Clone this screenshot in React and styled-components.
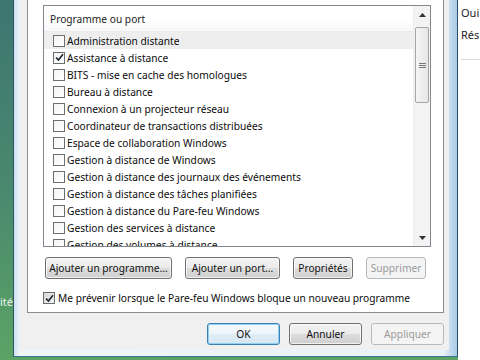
import React from 'react';
import styled, { createGlobalStyle, css } from 'styled-components';

const Global = createGlobalStyle`
  html, body { margin: 0; padding: 0; }
  body {
    width: 480px; height: 360px; overflow: hidden;
    font-family: "Noto Sans", "Open Sans", sans-serif;
    font-size: 10.2px; color: #0c0c0c;
  }
`;

const Screen = styled.div`
  width: 480px; height: 360px; display: flex; overflow: hidden;
  background: linear-gradient(180deg, #3d7571 0%, #4a8a6e 55%, #5ba365 100%);
`;

const DesktopEdge = styled.div`
  width: 13px; flex: none; overflow: hidden; box-sizing: border-box;
  padding-top: 294px; display: flex; justify-content: flex-end;
  color: #eaf5ec; font-size: 11px; white-space: nowrap;
`;

const Window = styled.div`
  width: 445px; height: 357px; flex: none; box-sizing: border-box;
  border-left: 1px solid #2c5563; border-right: 1px solid #2b4e6a;
  border-bottom: 1px solid #3d7390;
  background: linear-gradient(90deg, #cde0f1 0%, #eef5fb 1.4%, #eaf3fa 97%, #c8def0 98.3%, #a9cbe7 100%);
  padding: 0 8px 6px 6px;
  display: flex; flex-direction: column;
`;

const Dialog = styled.div`
  flex: 1; background: #f0f0f0; display: flex; flex-direction: column;
  padding: 0 5px 0 7px; min-height: 0;
`;

const TabPage = styled.div`
  height: 313px; flex: none; box-sizing: border-box; background: #fff;
  border: 1px solid #898c95; border-top: none;
  padding: 5px 0 0 15px; display: flex; flex-direction: column;
`;

const ListBox = styled.div`
  width: 388px; height: 242px; box-sizing: border-box; flex: none;
  border: 1px solid #828790; display: flex; overflow: hidden; background: #fff;
`;

const ListContent = styled.div`
  flex: 1; display: flex; flex-direction: column; overflow: hidden;
`;

const Header = styled.div`
  height: 26px; flex: none; display: flex; align-items: center;
  padding-left: 6px; box-sizing: border-box;
  background: linear-gradient(180deg, #ffffff 0%, #ffffff 55%, #f7f8f9 100%);
  border-bottom: 1px solid #eaecee; color: #222;
`;

const Row = styled.div`
  height: 17px; flex: none; display: flex; align-items: center;
  padding-left: 9px; gap: 2px; white-space: nowrap;
  background: ${p => (p.$hot ? '#eeeeee' : 'transparent')};
`;

const Box = styled.span`
  width: ${p => p.$size}px; height: ${p => p.$size}px; box-sizing: border-box; flex: none;
  border: 1px solid #6e6e6e; display: inline-flex; align-items: center; justify-content: center;
  background: ${p => (p.$grey ? 'linear-gradient(135deg, #d8d8d8, #f2f2f2)' : 'linear-gradient(135deg, #f4f4f4, #ffffff)')};
`;

const Scrollbar = styled.div`
  width: 17px; flex: none; display: flex; flex-direction: column;
  background: #f3f3f3; border-left: 1px solid #ededed; box-sizing: border-box;
`;

const ArrowBtn = styled.div`
  height: 17px; flex: none; display: flex; align-items: center; justify-content: center;
`;

const Thumb = styled.div`
  margin: 4px 1px 0 1px; height: 76px; box-sizing: border-box;
  border: 1px solid #a5a5a5; border-radius: 2px;
  background: linear-gradient(90deg, #f5f5f5, #e6e6e6);
  display: flex; align-items: center; justify-content: center;
`;

const Track = styled.div` flex: 1; `;

const ButtonRow = styled.div`
  display: flex; gap: 13px; margin-top: 10px; padding-left: 2px;
`;

const Button = styled.button`
  width: ${p => p.$w}px; height: 22px; box-sizing: border-box; padding: 0;
  font-family: inherit; font-size: 10.2px; color: #111; white-space: nowrap;
  border: 1px solid #707070; border-radius: 3px;
  background: linear-gradient(180deg, #f2f2f2 0%, #ebebeb 50%, #dddddd 51%, #cfcfcf 100%);
  box-shadow: inset 0 0 0 1px rgba(255,255,255,0.7);
  ${p => p.$disabled && css`
    color: #9a9a9a; border-color: #b6babd;
    background: #f4f4f4; box-shadow: none;
  `}
  ${p => p.$default && css`
    border-color: #3c7fb1;
    background: linear-gradient(180deg, #f4f9fc 0%, #eef5fa 50%, #e0edf6 51%, #d6e7f3 100%);
    box-shadow: inset 0 0 0 1px #8fd0f3;
  `}
`;

const CheckRow = styled.div`
  display: flex; align-items: center; gap: 3px; margin-top: 12px;
  white-space: nowrap;
`;

const Footer = styled.div`
  display: flex; justify-content: flex-end; gap: 9px; margin-top: 10px;
`;

const Behind = styled.div`
  flex: 1; background: #fff; display: flex; flex-direction: column;
  padding: 1px 0 0 3px; color: #222; white-space: nowrap; overflow: hidden;
  font-size: 11px;
`;

const BehindLine = styled.div` height: 22px; display: flex; align-items: center; `;
const BehindRule = styled.div` margin-top: 14px; height: 1px; background: #dcdcdc; `;

const Check = () => (
  <svg width="9" height="9" viewBox="0 0 9 9">
    <path d="M1 4.5 L3.4 7 L8 1.2" fill="none" stroke="#1d2530" strokeWidth="1.6" />
  </svg>
);

const items = [
  'Administration distante',
  'Assistance à distance',
  'BITS - mise en cache des homologues',
  'Bureau à distance',
  'Connexion à un projecteur réseau',
  'Coordinateur de transactions distribuées',
  'Espace de collaboration Windows',
  'Gestion à distance de Windows',
  'Gestion à distance des journaux des événements',
  'Gestion à distance des tâches planifiées',
  'Gestion à distance du Pare-feu Windows',
  'Gestion des services à distance',
  'Gestion des volumes à distance',
];

export default function App() {
  return (
    <>
      <Global />
      <Screen>
        <DesktopEdge><span>Sécurité</span></DesktopEdge>
        <Window>
          <Dialog>
            <TabPage>
              <ListBox>
                <ListContent>
                  <Header>Programme ou port</Header>
                  {items.map((t, i) => (
                    <Row key={t} $hot={i === 0}>
                      <Box $size={12}>{i === 1 && <Check />}</Box>
                      <span>{t}</span>
                    </Row>
                  ))}
                </ListContent>
                <Scrollbar>
                  <ArrowBtn>
                    <svg width="7" height="4" viewBox="0 0 7 4"><path d="M0 4 L3.5 0 L7 4 Z" fill="#333" /></svg>
                  </ArrowBtn>
                  <Thumb>
                    <svg width="7" height="7" viewBox="0 0 7 7">
                      <path d="M0 1.5H7M0 3.5H7M0 5.5H7" stroke="#777" strokeWidth="1" />
                    </svg>
                  </Thumb>
                  <Track />
                  <ArrowBtn>
                    <svg width="7" height="4" viewBox="0 0 7 4"><path d="M0 0 L3.5 4 L7 0 Z" fill="#333" /></svg>
                  </ArrowBtn>
                </Scrollbar>
              </ListBox>
              <ButtonRow>
                <Button $w={127}>Ajouter un programme...</Button>
                <Button $w={95}>Ajouter un port...</Button>
                <Button $w={60}>Propriétés</Button>
                <Button $w={60} $disabled>Supprimer</Button>
              </ButtonRow>
              <CheckRow>
                <Box $size={12} $grey><Check /></Box>
                <span>Me prévenir lorsque le Pare-feu Windows bloque un nouveau programme</span>
              </CheckRow>
            </TabPage>
            <Footer>
              <Button $w={73} $default>OK</Button>
              <Button $w={73}>Annuler</Button>
              <Button $w={73} $disabled>Appliquer</Button>
            </Footer>
          </Dialog>
        </Window>
        <Behind>
          <BehindLine>Oui</BehindLine>
          <BehindLine>Rés</BehindLine>
          <BehindRule />
        </Behind>
      </Screen>
    </>
  );
}
